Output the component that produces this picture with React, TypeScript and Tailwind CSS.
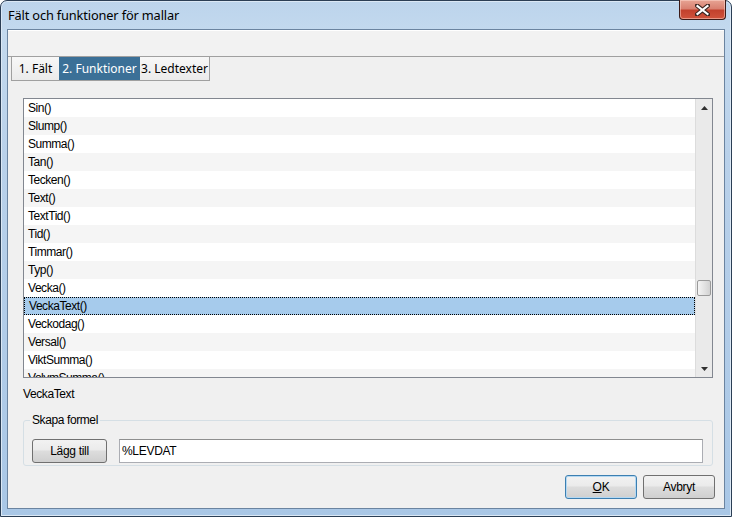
import React from 'react';

const items = [
  'Sin()', 'Slump()', 'Summa()', 'Tan()', 'Tecken()', 'Text()', 'TextTid()', 'Tid()',
  'Timmar()', 'Typ()', 'Vecka()', 'VeckaText()', 'Veckodag()', 'Versal()', 'ViktSumma()', 'VolymSumma()',
];

const selected = 'VeckaText()';

const tabs = [
  { label: '1. Fält', w: 'w-[48px]' },
  { label: '2. Funktioner', w: 'w-[81px]' },
  { label: '3. Ledtexter', w: 'w-[70px]' },
];

const ui = "font-['Noto_Sans','Open_Sans',sans-serif]";
const sys = "font-['Liberation_Sans',Arial,sans-serif]";

function WinButton({ label, isDefault, className }: { label: React.ReactNode; isDefault?: boolean; className: string }) {
  return (
    <button
      className={`${className} h-[24px] rounded-[3px] border ${
        isDefault ? 'border-[#3c7fb1] shadow-[inset_0_0_0_1px_#b4d8f2]' : 'border-[#707070]'
      } bg-[linear-gradient(#f2f2f2_0%,#ebebeb_45%,#dddddd_50%,#cfcfcf_100%)] text-[12px] text-black ${sys} tracking-[-0.3px] flex items-center justify-center`}
    >
      {label}
    </button>
  );
}

export default function App() {
  return (
    <div className="w-[732px] h-[517px] bg-white">
      <div className="w-[732px] h-[517px] flex flex-col rounded-t-[7px] border border-[#2b3e55] bg-[linear-gradient(180deg,#bcd4ec_0%,#c3d9ee_6%,#b9d1ea_30%,#a9c7e6_100%)] px-[6px] pb-[7px] shadow-[inset_0_0_0_1px_#dbe8f5]">
        {/* Title bar */}
        <div className="h-[28px] flex items-center relative shrink-0">
          <span className={`pl-[1px] pt-[1px] text-[12.8px] text-black ${ui} tracking-[-0.15px]`}>
            Fält och funktioner för mallar
          </span>
          <div className="absolute right-[-1px] top-[-1px] w-[47px] h-[20px] rounded-b-[4px] border border-[#3b1a17] border-t-0 bg-[linear-gradient(180deg,#e7a494_0%,#d98171_45%,#c2412d_55%,#d0533c_100%)] flex items-center justify-center shadow-[inset_0_0_0_1px_rgba(255,220,210,0.5)]">
            <svg width="15" height="12" viewBox="0 0 15 12">
              <path d="M2 1.5 L13 10.5 M13 1.5 L2 10.5" stroke="#3a2420" strokeWidth="4.2" strokeLinecap="round" />
              <path d="M2.5 2 L12.5 10 M12.5 2 L2.5 10" stroke="#ffffff" strokeWidth="2.2" strokeLinecap="square" />
            </svg>
          </div>
        </div>

        {/* Client area */}
        <div className="flex-1 flex flex-col border border-[#6b84a0] bg-[#f0f0f0]">
          {/* Toolbar strip */}
          <div className="h-[27px] shrink-0 bg-[#f2f2f2] border-b border-[#a0a0a0] shadow-[inset_0_1px_0_#ffffff]" />

          {/* Tabs */}
          <div className={`flex pl-[3px] h-[24px] shrink-0 ${ui}`}>
            {tabs.map((t, i) => (
              <div
                key={t.label}
                className={`${t.w} h-[24px] flex items-center justify-center text-[12px] border-b border-[#a0a0a0] ${
                  i === 1
                    ? 'bg-[#3b7097] text-white border-[#3b7097]'
                    : 'bg-[linear-gradient(#f7f7f7,#ebebeb)] text-black border-l border-r border-[#a0a0a0]'
                } ${i === 0 ? 'border-r-0' : ''} ${i === 2 ? 'border-l-0' : ''}`}
              >
                {t.label}
              </div>
            ))}
          </div>

          {/* List box */}
          <div className="mt-[17px] ml-[15px] mr-[11px] h-[280px] border border-[#828790] bg-white flex overflow-hidden shrink-0">
            <div className={`flex-1 overflow-hidden ${sys}`}>
              {items.map((it, i) => {
                const isSel = it === selected;
                return (
                  <div
                    key={it}
                    className={`h-[18px] pl-[4px] flex items-center text-[12px] tracking-[-0.45px] text-black ${
                      isSel
                        ? 'bg-[#a6cbec] border border-dotted border-black pl-[3px]'
                        : i % 2 === 1
                        ? 'bg-[#f5f5f5]'
                        : 'bg-white'
                    }`}
                  >
                    {it}
                  </div>
                );
              })}
            </div>
            {/* Scrollbar */}
            <div className="w-[17px] shrink-0 bg-[#eaeaea] border-l border-[#dcdcdc] flex flex-col items-center">
              <div className="h-[17px] w-full flex items-center justify-center">
                <svg width="7" height="4" viewBox="0 0 7 4">
                  <path d="M0 4 L3.5 0 L7 4 Z" fill="#303030" />
                </svg>
              </div>
              <div className="h-[164px]" />
              <div className="w-[14px] h-[16px] rounded-[2px] border border-[#9a9a9a] bg-[linear-gradient(90deg,#f4f4f4,#e2e2e2_55%,#d2d2d2)]" />
              <div className="flex-1" />
              <div className="h-[17px] w-full flex items-center justify-center">
                <svg width="7" height="4" viewBox="0 0 7 4">
                  <path d="M0 0 L7 0 L3.5 4 Z" fill="#303030" />
                </svg>
              </div>
            </div>
          </div>

          {/* Selected name */}
          <div className={`ml-[15px] mt-[8px] h-[16px] flex items-center text-[12px] tracking-[-0.4px] text-black ${sys}`}>
            VeckaText
          </div>

          {/* Group box */}
          <fieldset className="ml-[15px] mr-[11px] mt-[9px] h-[55px] rounded-[3px] border border-[#d5dfe5] px-[8px] flex items-start gap-[12px]">
            <legend className={`ml-[-2px] px-[2px] text-[12px] tracking-[-0.4px] text-black ${sys}`}>
              Skapa formel
            </legend>
            <WinButton label="Lägg till" className="w-[75px] mt-[10px]" />
            <div className={`flex-1 mr-[1px] mt-[10px] h-[24px] border border-[#abadb3] border-t-[#8e8f8f] bg-white px-[2px] pt-[2px] text-[12px] tracking-[-0.3px] text-black ${sys}`}>
              %LEVDAT
            </div>
          </fieldset>

          {/* Dialog buttons */}
          <div className="flex justify-end gap-[6px] mt-[9px] mr-[9px]">
            <WinButton
              label={
                <span>
                  <span className="underline">O</span>K
                </span>
              }
              isDefault
              className="w-[72px]"
            />
            <WinButton label="Avbryt" className="w-[72px]" />
          </div>
        </div>
      </div>
    </div>
  );
}
